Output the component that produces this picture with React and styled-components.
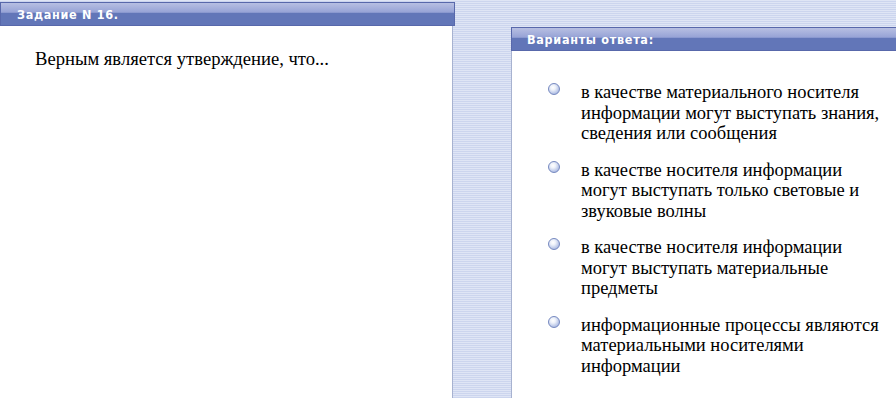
import styled, { createGlobalStyle } from 'styled-components'

const GlobalStyle = createGlobalStyle`
  html, body {
    margin: 0;
    padding: 0;
    height: 100%;
  }
  body {
    background: repeating-linear-gradient(to bottom, #dfe5f5 0px, #dfe5f5 1px, #ccd5ee 1px, #ccd5ee 2px);
    overflow: hidden;
  }
  #root {
    height: 100%;
  }
`

const serif = `"Liberation Serif", "Times New Roman", serif`

const Page = styled.div`
  display: flex;
  align-items: stretch;
  height: 398px;
`

const LeftColumn = styled.div`
  width: 455px;
  display: flex;
  flex-direction: column;
  padding-top: 2px;
`

const RightColumn = styled.div`
  flex: 1;
  display: flex;
  flex-direction: column;
  margin-left: 56px;
  padding-top: 27px;
`

const Header = styled.div`
  box-sizing: border-box;
  height: 24px;
  border: 1px solid #5868ab;
  border-right-width: ${(props) => (props.open ? 0 : 1)}px;
  background: linear-gradient(
    to bottom,
    #b7bfe2 0%,
    #97a3d6 42%,
    #6276b8 47%,
    #6276b8 100%
  );
  color: #fff;
  font-family: "DejaVu Sans Condensed", "DejaVu Sans", Verdana, sans-serif;
  font-weight: bold;
  font-size: 12.5px;
  letter-spacing: 0.7px;
  line-height: 14px;
  padding-left: ${(props) => props.indent}px;
  padding-top: ${(props) => props.top}px;
`

const LeftBody = styled.div`
  flex: 1;
  width: 453px;
  background: #fff;
  border-right: 1px solid #a7b2d0;
  padding: 23px 0 0 35px;
  box-sizing: border-box;
  font-family: ${serif};
  font-size: 18.6px;
  line-height: 20.5px;
  color: #000;
`

const RightBody = styled.div`
  flex: 1;
  background: #fff;
  border-left: 1px solid #a7b2d0;
  padding: 31px 0 0 36px;
  display: flex;
  flex-direction: column;
  gap: 16px;
`

const Option = styled.label`
  display: flex;
  align-items: flex-start;
  gap: 21px;
  font-family: ${serif};
  font-size: 18.5px;
  line-height: 20.5px;
  color: #000;
`

const Radio = styled.span`
  flex: none;
  box-sizing: border-box;
  width: 12px;
  height: 12px;
  margin-top: 1px;
  border-radius: 50%;
  border: 1px solid #7689c0;
  background: radial-gradient(circle at 40% 35%, #ffffff 0%, #eef2fa 28%, #b2c0e5 72%, #8a9ed2 100%);
`

const OptionText = styled.span`
  flex: none;
  width: 305px;
`

const answers = [
  'в качестве материального носителя информации могут выступать знания, сведения или сообщения',
  'в качестве носителя информации могут выступать только световые и звуковые волны',
  'в качестве носителя информации могут выступать материальные предметы',
  'информационные процессы являются материальными носителями информации',
]

function App() {
  return (
    <>
      <GlobalStyle />
      <Page>
        <LeftColumn>
          <Header indent={16} top={5}>Задание N 16.</Header>
          <LeftBody>Верным является утверждение, что...</LeftBody>
        </LeftColumn>
        <RightColumn>
          <Header indent={15} top={5} open>Варианты ответа:</Header>
          <RightBody>
            {answers.map((text) => (
              <Option key={text}>
                <Radio />
                <OptionText>{text}</OptionText>
              </Option>
            ))}
          </RightBody>
        </RightColumn>
      </Page>
    </>
  )
}

export default App
